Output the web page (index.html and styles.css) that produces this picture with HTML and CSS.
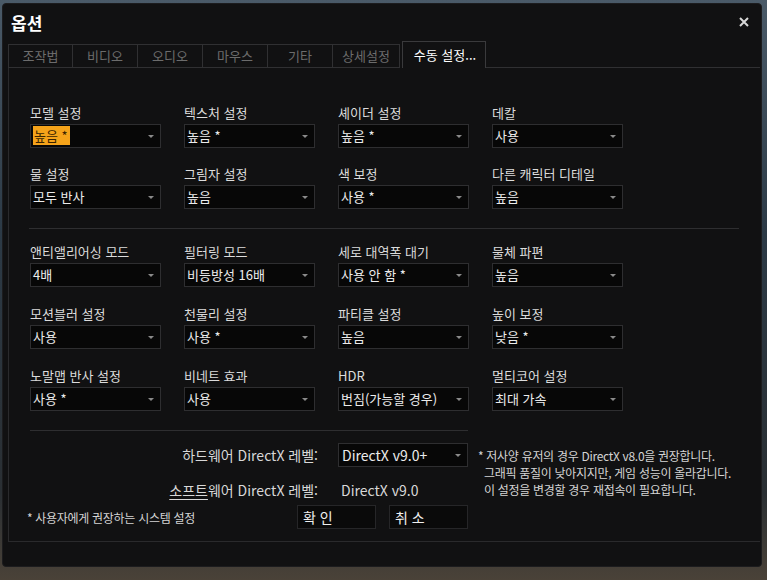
FILE: index.html
```html
<!DOCTYPE html>
<html lang="ko">
<head>
  <meta charset="UTF-8" />
  <meta name="viewport" content="width=device-width, initial-scale=1.0"/>
  <title>옵션</title>
  <link rel="stylesheet" href="styles.css">
</head>
<body>
  <div class="window">
    <div class="titlebar">
      <div class="title">옵션</div>
      <svg class="close" width="10" height="10" viewBox="0 0 10 10"><path d="M1 1L9 9M9 1L1 9" stroke="#d8d8d8" stroke-width="2"/></svg>
    </div>

    <div class="tabs">
      <div class="tab">조작법</div>
      <div class="tab">비디오</div>
      <div class="tab">오디오</div>
      <div class="tab">마우스</div>
      <div class="tab">기타</div>
      <div class="tab">상세설정</div>
      <div class="tab active">수동 설정...</div>
      <div class="tab-fill"></div>
    </div>

    <div class="panel">
      <div class="grid">
        <div class="field"><div class="label">모델 설정</div><div class="select"><span class="hl">높음 *</span></div></div>
        <div class="field"><div class="label">텍스처 설정</div><div class="select">높음 *</div></div>
        <div class="field"><div class="label">셰이더 설정</div><div class="select">높음 *</div></div>
        <div class="field"><div class="label">데칼</div><div class="select">사용</div></div>
        <div class="field"><div class="label">물 설정</div><div class="select">모두 반사</div></div>
        <div class="field"><div class="label">그림자 설정</div><div class="select">높음</div></div>
        <div class="field"><div class="label">색 보정</div><div class="select">사용 *</div></div>
        <div class="field"><div class="label">다른 캐릭터 디테일</div><div class="select">높음</div></div>
      </div>

      <div class="sep"></div>

      <div class="grid second">
        <div class="field"><div class="label">앤티앨리어싱 모드</div><div class="select">4배</div></div>
        <div class="field"><div class="label">필터링 모드</div><div class="select">비등방성 16배</div></div>
        <div class="field"><div class="label">세로 대역폭 대기</div><div class="select">사용 안 함 *</div></div>
        <div class="field"><div class="label">물체 파편</div><div class="select">높음</div></div>
        <div class="field"><div class="label">모션블러 설정</div><div class="select">사용</div></div>
        <div class="field"><div class="label">천물리 설정</div><div class="select">사용 *</div></div>
        <div class="field"><div class="label">파티클 설정</div><div class="select">높음</div></div>
        <div class="field"><div class="label">높이 보정</div><div class="select">낮음 *</div></div>
        <div class="field"><div class="label">노말맵 반사 설정</div><div class="select">사용 *</div></div>
        <div class="field"><div class="label">비네트 효과</div><div class="select">사용</div></div>
        <div class="field"><div class="label">HDR</div><div class="select">번짐(가능할 경우)</div></div>
        <div class="field"><div class="label">멀티코어 설정</div><div class="select">최대 가속</div></div>
      </div>

      <div class="dx-area">
        <div class="dx-left">
          <div class="sep short"></div>
          <div class="dx-row">
            <div class="dx-label">하드웨어 DirectX 레벨:</div>
            <div class="select">DirectX v9.0+</div>
          </div>
          <div class="dx-row soft">
            <div class="dx-label"><u>소프트</u>웨어 DirectX 레벨:</div>
            <div class="dx-value">DirectX v9.0</div>
          </div>
        </div>
        <div class="note">
          <div>* 저사양 유저의 경우 DirectX v8.0을 권장합니다.</div>
          <div class="indent">그래픽 품질이 낮아지지만, 게임 성능이 올라갑니다.</div>
          <div class="indent">이 설정을 변경할 경우 재접속이 필요합니다.</div>
        </div>
      </div>

      <div class="footer">
        <div class="hint">* 사용자에게 권장하는 시스템 설정</div>
        <div class="buttons">
          <div class="btn">확 인</div>
          <div class="btn">취 소</div>
        </div>
      </div>
    </div>
  </div>
</body>
</html>
```

FILE: styles.css
```css
body {
  margin: 0;
  height: 580px;
  overflow: hidden;
  font-family: "Noto Sans CJK KR", "Noto Sans", sans-serif;
  background: linear-gradient(to bottom, #4a5a68 0px, #2c3a46 40%, #2a2f33 85%, #4a4238 100%);
}

.window {
  margin: 3px 5px 0 2px;
  height: 564px;
  background: #111112;
  border: 1px solid #1c1c1e;
  border-radius: 4px;
  box-sizing: border-box;
  color: #e0e0e0;
}

.titlebar {
  height: 35px;
  display: flex;
  align-items: center;
  justify-content: space-between;
  padding: 0 12px 0 8px;
}

.title {
  font-size: 17px;
  font-weight: bold;
  color: #fff;
  line-height: 20px;
  margin-top: 2px;
}

.close { margin-top: 0; }

.tabs {
  display: flex;
  align-items: flex-end;
  margin: 0 1px 0 5px;
  height: 29px;
}

.tab {
  height: 24px;
  box-sizing: border-box;
  border: 1px solid #303032;
  border-left: none;
  color: #6c6c6c;
  font-size: 13px;
  line-height: 22px;
  text-align: center;
  width: 65px;
}

.tab:first-child { border-left: 1px solid #303032; }
.tab:nth-child(6) { width: 67px; }

.tab.active {
  height: 27px;
  width: 84px;
  margin-left: 2px;
  border: 1px solid #3a3a3c;
  border-bottom: none;
  color: #fff;
  line-height: 26px;
  padding-left: 2px;
}

.tab-fill {
  flex: 1;
  border-bottom: 1px solid #303032;
}

.panel {
  margin: 0 1px 0 5px;
  height: 474px;
  box-sizing: border-box;
  border-left: 1px solid #2a2a2c;
  border-bottom: 1px solid #2a2a2c;
  padding: 36px 0 0 21px;
}

.grid {
  display: grid;
  grid-template-columns: repeat(4, 131px);
  column-gap: 23px;
  row-gap: 17px;
}

.grid.second { row-gap: 18px; }

.label {
  font-size: 13px;
  line-height: 18px;
  height: 18px;
  color: #dcdcdc;
  margin-bottom: 2px;
  white-space: nowrap;
}

.select {
  position: relative;
  height: 24px;
  box-sizing: border-box;
  border: 1px solid #2e2e30;
  background: #070707;
  font-size: 13px;
  line-height: 22px;
  padding-left: 2px;
  color: #ececec;
  white-space: nowrap;
}

.select::after {
  content: "";
  position: absolute;
  right: 6px;
  top: 10px;
  border-left: 3px solid transparent;
  border-right: 3px solid transparent;
  border-top: 3px solid #8a8a8a;
}

.hl {
  display: inline-block;
  background: #f5a31a;
  color: #3a2400;
  line-height: 19px;
  padding: 0 2px 0 1px;
  margin-top: 1px;
}

.sep {
  height: 1px;
  background: #2e2e30;
  width: 710px;
  margin: 19px 0 14px -1px;
}

.sep.short {
  width: 438px;
  margin: 0 0 12px 0;
}

.dx-area {
  display: flex;
  margin-top: 19px;
}

.dx-left { width: 438px; }

.dx-row {
  display: flex;
  align-items: center;
  height: 24px;
}

.dx-row .select { width: 130px; font-size: 14px; padding-left: 3px; }

.dx-row.soft { margin-top: 11px; }

.dx-label {
  width: 288px;
  text-align: right;
  padding-right: 20px;
  font-size: 14px;
  color: #d8d8d8;
  white-space: nowrap;
}

.dx-label u { text-underline-offset: 3px; }

.dx-value {
  font-size: 14px;
  color: #d8d8d8;
  padding-left: 3px;
}

.note {
  margin: 17px 0 0 10px;
  font-size: 12px;
  line-height: 17px;
  color: #d4d4d4;
  white-space: nowrap;
  letter-spacing: -0.3px;
}

.note .indent { padding-left: 6px; }

.footer {
  display: flex;
  align-items: center;
  width: 441px;
  margin: 3px 0 0 -3px;
}

.hint {
  font-size: 12px;
  color: #d4d4d4;
  letter-spacing: -0.3px;
}

.buttons {
  margin-left: auto;
  display: flex;
  gap: 13px;
}

.btn {
  width: 79px;
  height: 24px;
  box-sizing: border-box;
  border: 1px solid #262628;
  background: #0a0a0a;
  font-size: 14px;
  line-height: 22px;
  padding-left: 5px;
  color: #f0f0f0;
}
```
